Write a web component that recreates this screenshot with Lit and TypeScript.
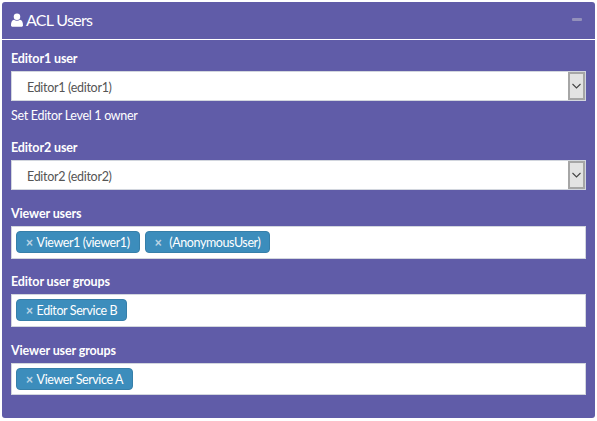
import { LitElement, html, css } from "lit";
import { customElement } from "lit/decorators.js";

@customElement("app-root")
export class AppRoot extends LitElement {
  static styles = css`
    :host { display: block; width: 597px; height: 421px; background: #fff; font-family: Lato, "Noto Sans", sans-serif; font-size: 12.5px; letter-spacing: -0.3px; color: #fff; box-sizing: border-box; padding: 2px 2px 3px 2px; }
    * { box-sizing: border-box; }
    .panel { background: #605ca8; border-radius: 3px; height: 416px; width: 593px; display: flex; flex-direction: column; }
    .head { height: 38px; border-bottom: 1px solid #fff; display: flex; align-items: center; padding: 0 9px 2px; flex: none; }
    .title { font-size: 16px; letter-spacing: -0.7px; line-height: 20px; display: flex; align-items: center; gap: 3px; }
    .title svg { width: 12px; height: 14px; display: block; }
    .minus { margin: -1px 4px 0 auto; width: 10px; height: 3px; background: #9390bb; border-radius: 1px; }
    .body { padding: 10px 9px 0; display: flex; flex-direction: column; }
    label { font-weight: 700; letter-spacing: -0.12px; line-height: 16px; display: block; padding-top: 1px; margin-bottom: 4px; }
    .select { height: 30px; background: #fff; border: 1px solid #d2d6de; color: #555; display: flex; align-items: center; padding-left: 15px; }
    .select span { flex: 1; padding-top: 2px; }
    .arrow { width: 17px; height: 28px; background: #e3e3e3; border: 2px solid #a6a6a6; display: flex; align-items: center; justify-content: center; }
    .arrow svg { width: 9px; height: 6px; display: block; }
    .help { line-height: 16px; margin-top: 7px; }
    .group { margin-bottom: 14px; }
    .group.sel { margin-bottom: 15px; }
    .group.first { margin-bottom: 15px; }
    .group.wide { margin-bottom: 15px; }
    .tags { height: 33px; background: #fff; border: 1px solid #d2d6de; display: flex; align-items: flex-start; gap: 5px; padding: 4px; }
    .tags.short { height: 32px; }
    .tag { height: 22px; background: #3c8dbc; border: 1px solid #367fa9; border-radius: 4px; color: #fff; display: flex; align-items: center; padding: 2px 9px 0 9px; line-height: 18px; letter-spacing: -0.4px; white-space: nowrap; }
    .x { color: #b9d3e4; font-family: "Liberation Sans", sans-serif; font-weight: 700; font-size: 12px; margin-right: 4px; }
    .x.gap { margin-right: 8px; }
  `;

  private tags(items: string[], short = false) {
    return html`<div class="tags ${short ? "short" : ""}">
      ${items.map((t) => html`<div class="tag"><span class="x ${t.startsWith("(") ? "gap" : ""}">×</span>${t}</div>`)}
    </div>`;
  }

  private select(text: string) {
    return html`<div class="select"><span>${text}</span><div class="arrow">
      <svg viewBox="0 0 9 6"><path d="M.5 1 4.500 5 8.500 1" fill="none" stroke="#444" stroke-width="1.1"/></svg>
    </div></div>`;
  }

  render() {
    return html`<div class="panel">
      <div class="head">
        <div class="title">
          <svg viewBox="0 0 14 16"><circle cx="7" cy="4.200" r="3.800" fill="#fff"/><path d="M0 14.200C0 10.500 1 8 3.600 7.600 4.500 8.400 5.700 8.900 7 8.900s2.500-.5 3.400-1.300C13 8 14 10.500 14 14.200 14 15.300 13.200 16 12 16H2C.8 16 0 15.300 0 14.200Z" fill="#fff"/></svg>
          ACL Users
        </div>
        <div class="minus"></div>
      </div>
      <div class="body">
        <div class="group first"><label>Editor1 user</label>${this.select("Editor1 (editor1)")}<div class="help">Set Editor Level 1 owner</div></div>
        <div class="group sel"><label>Editor2 user</label>${this.select("Editor2 (editor2)")}</div>
        <div class="group"><label>Viewer users</label>${this.tags(["Viewer1 (viewer1)", "(AnonymousUser)"])}</div>
        <div class="group wide"><label>Editor user groups</label>${this.tags(["Editor Service B"])}</div>
        <div class="group"><label>Viewer user groups</label>${this.tags(["Viewer Service A"], true)}</div>
      </div>
    </div>`;
  }
}
